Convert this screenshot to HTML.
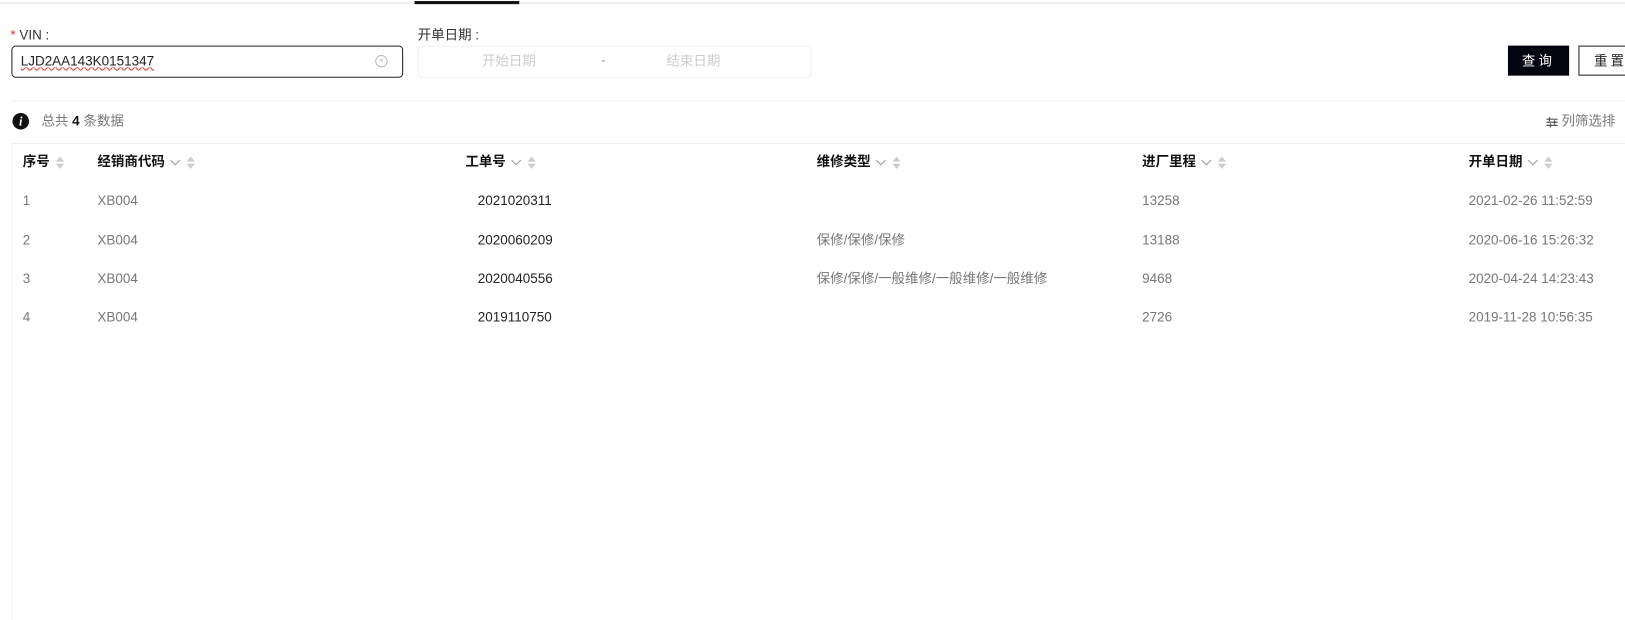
<!DOCTYPE html>
<html><head><meta charset="utf-8"><style>
html,body{margin:0;padding:0;background:#fff;overflow:hidden;width:1625px;height:613px}
#w{position:absolute;left:0;top:0;width:1568px;height:592px;transform:scale(1.0364);transform-origin:0 0;font-family:"Liberation Sans","Noto Sans CJK SC",sans-serif;font-size:13px;color:#333}
.a{position:absolute;white-space:nowrap;line-height:16px}
.hd{font-weight:bold;color:#111}
.g{color:#777}
.d{color:#222}
.ar{display:inline-block;vertical-align:middle;margin-left:6px;width:8px;height:12px;position:relative}
.ar:before{content:"";position:absolute;left:0;top:0;border:4px solid transparent;border-bottom:5px solid #ccc;border-top:0}
.ar:after{content:"";position:absolute;left:0;top:7px;border:4px solid transparent;border-top:5px solid #ccc;border-bottom:0}
.cv{display:inline-block;vertical-align:middle;margin-left:5px;width:10px;height:6px}
</style></head><body><div id="w">
<div class="a" style="left:0;top:2px;width:1568px;height:2px;background:#eee"></div>
<div class="a" style="left:400px;top:1px;width:101px;height:3px;background:#111"></div>
<div class="a" style="left:10px;top:26px"><span style="color:#e33">*</span> VIN :</div>
<div class="a" style="left:11px;top:44px;width:376px;height:29px;border:1px solid #222;border-radius:4px"></div>
<div class="a d" style="left:20px;top:51px;text-decoration:underline wavy #d44;text-decoration-thickness:1px">LJD2AA143K0151347</div>
<div class="a" style="left:362px;top:53px;width:10px;height:10px;border:1px solid #bbb;border-radius:50%;font-size:8px;line-height:10px;text-align:center;color:#bbb">×</div>
<div class="a" style="left:403px;top:26px">开单日期 :</div>
<div class="a" style="left:403px;top:44px;width:378px;height:29px;border:1px solid #f0f0f0;border-radius:4px"></div>
<div class="a" style="left:465px;top:51px;color:#ccc">开始日期</div>
<div class="a" style="left:580px;top:50px;color:#999">-</div>
<div class="a" style="left:643px;top:51px;color:#ccc">结束日期</div>
<div class="a" style="left:1455px;top:44px;width:59px;height:29px;background:#05050f;color:#fff;text-align:center;line-height:29px;letter-spacing:3px">查询</div>
<div class="a" style="left:1523px;top:44px;width:60px;height:27px;border:1px solid #222;text-align:center;line-height:27px;letter-spacing:3px;color:#222">重置</div>
<div class="a" style="left:10px;top:97px;width:1558px;height:1px;background:#f0f0f0"></div>
<div class="a" style="left:12px;top:109px;width:16px;height:16px;border-radius:50%;background:#111;color:#fff;font:italic bold 12px 'Liberation Serif',serif;text-align:center;line-height:16px">i</div>
<div class="a g" style="left:40px;top:109px">总共 <b style="color:#111">4</b> 条数据</div>
<div class="a g" style="left:1492px;top:109px"><svg width="11" height="10" style="vertical-align:middle" viewBox="0 0 11 10"><path d="M0 2h11M0 5h11M0 8h11M3 0v4M8 3v4M4 6v4" stroke="#555" stroke-width="1.2" fill="none"/></svg> 列筛选排</div>
<div class="a" style="left:11px;top:138px;width:1557px;height:1px;background:#eee"></div>
<div class="a" style="left:11px;top:138px;width:1px;height:460px;background:#eee"></div>
<div class="a hd" style="left:22px;top:148px">序号<span class="ar"></span></div>
<div class="a hd" style="left:94px;top:148px">经销商代码<svg class="cv" viewBox="0 0 10 6"><path d="M0.5 0.5L5 5L9.5 0.5" stroke="#999" fill="none"/></svg><span class="ar"></span></div>
<div class="a hd" style="left:449px;top:148px">工单号<svg class="cv" viewBox="0 0 10 6"><path d="M0.5 0.5L5 5L9.5 0.5" stroke="#999" fill="none"/></svg><span class="ar"></span></div>
<div class="a hd" style="left:788px;top:148px">维修类型<svg class="cv" viewBox="0 0 10 6"><path d="M0.5 0.5L5 5L9.5 0.5" stroke="#999" fill="none"/></svg><span class="ar"></span></div>
<div class="a hd" style="left:1102px;top:148px">进厂里程<svg class="cv" viewBox="0 0 10 6"><path d="M0.5 0.5L5 5L9.5 0.5" stroke="#999" fill="none"/></svg><span class="ar"></span></div>
<div class="a hd" style="left:1417px;top:148px">开单日期<svg class="cv" viewBox="0 0 10 6"><path d="M0.5 0.5L5 5L9.5 0.5" stroke="#999" fill="none"/></svg><span class="ar"></span></div>

<div class="a g" style="left:22px;top:186px">1</div><div class="a g" style="left:94px;top:186px">XB004</div><div class="a d" style="left:461px;top:186px">2021020311</div><div class="a g" style="left:1102px;top:186px">13258</div><div class="a g" style="left:1417px;top:186px">2021-02-26 11:52:59</div>
<div class="a g" style="left:22px;top:224px">2</div><div class="a g" style="left:94px;top:224px">XB004</div><div class="a d" style="left:461px;top:224px">2020060209</div><div class="a g" style="left:788px;top:224px">保修/保修/保修</div><div class="a g" style="left:1102px;top:224px">13188</div><div class="a g" style="left:1417px;top:224px">2020-06-16 15:26:32</div>
<div class="a g" style="left:22px;top:261px">3</div><div class="a g" style="left:94px;top:261px">XB004</div><div class="a d" style="left:461px;top:261px">2020040556</div><div class="a g" style="left:788px;top:261px">保修/保修/一般维修/一般维修/一般维修</div><div class="a g" style="left:1102px;top:261px">9468</div><div class="a g" style="left:1417px;top:261px">2020-04-24 14:23:43</div>
<div class="a g" style="left:22px;top:298px">4</div><div class="a g" style="left:94px;top:298px">XB004</div><div class="a d" style="left:461px;top:298px">2019110750</div><div class="a g" style="left:1102px;top:298px">2726</div><div class="a g" style="left:1417px;top:298px">2019-11-28 10:56:35</div>
</div></body></html>
